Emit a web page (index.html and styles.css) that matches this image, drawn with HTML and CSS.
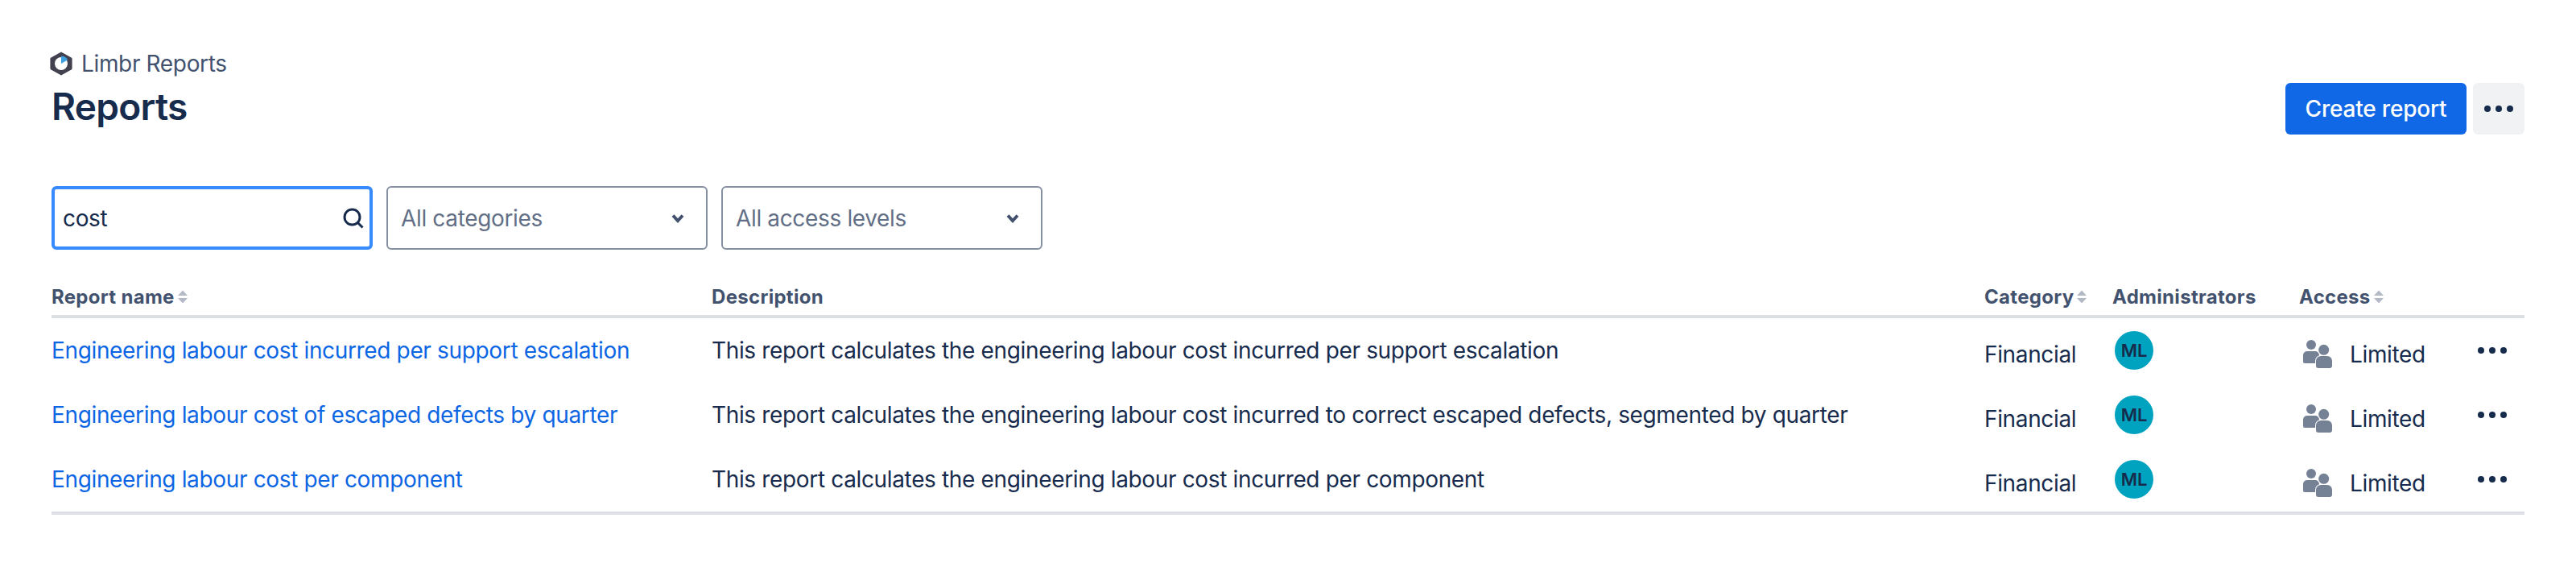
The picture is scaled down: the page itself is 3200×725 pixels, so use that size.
FILE: index.html
```html
<!DOCTYPE html>
<html lang="en">
<head>
<meta charset="utf-8">
<title>Reports</title>
<link rel="stylesheet" href="styles.css">
</head>
<body>
<main class="page">
  <header class="head">
    <div class="head-left">
      <div class="crumb">
        <svg class="logo" viewBox="0 0 28 30"><path d="M14 0.500 26.600 7.500a2 2 0 0 1 1 1.700v11.600a2 2 0 0 1-1 1.700L14 29.500 1.400 22.500a2 2 0 0 1-1-1.700V9.200a2 2 0 0 1 1-1.700z" fill="#42414f"/><circle cx="14" cy="15" r="8" fill="#fff"/><path d="M14 15V5.500a9.500 9.500 0 0 1 8.200 4.800z" fill="#3d9fe0"/></svg>
        <span>Limbr Reports</span>
      </div>
      <h1 class="title">Reports</h1>
    </div>
    <div class="actions">
      <button class="primary">Create report</button>
      <button class="more"><svg class="dots" viewBox="0 0 36 8"><circle cx="4" cy="4" r="4"/><circle cx="18" cy="4" r="4"/><circle cx="32" cy="4" r="4"/></svg></button>
    </div>
  </header>

  <section class="filters">
    <div class="field search"><span>cost</span>
      <svg class="search-icon" viewBox="0 0 26 26"><circle cx="11.500" cy="11.500" r="9.500"/><path d="M18.500 18.500 24.500 24.500"/></svg>
    </div>
    <div class="field select"><span>All categories</span>
      <svg class="chev" viewBox="0 0 16 12"><path d="M2 2.500 8 9l6-6.500"/></svg>
    </div>
    <div class="field select"><span>All access levels</span>
      <svg class="chev" viewBox="0 0 16 12"><path d="M2 2.500 8 9l6-6.500"/></svg>
    </div>
  </section>

  <section class="table">
    <div class="row header">
      <div class="c-name">Report name<svg class="sort" viewBox="0 0 12 16"><path d="M6 0 12 6.500H0z"/><path d="M0 9.500H12L6 16z"/></svg></div>
      <div class="c-desc">Description</div>
      <div class="c-cat">Category<svg class="sort" viewBox="0 0 12 16"><path d="M6 0 12 6.500H0z"/><path d="M0 9.500H12L6 16z"/></svg></div>
      <div class="c-admin">Administrators</div>
      <div class="c-access">Access<svg class="sort" viewBox="0 0 12 16"><path d="M6 0 12 6.500H0z"/><path d="M0 9.500H12L6 16z"/></svg></div>
      <div class="c-menu"></div>
    </div>

    <div class="row body">
      <div class="c-name"><a href="#">Engineering labour cost incurred per support escalation</a></div>
      <div class="c-desc">This report calculates the engineering labour cost incurred per support escalation</div>
      <div class="c-cat low">Financial</div>
      <div class="c-admin"><span class="avatar">ML</span></div>
      <div class="c-access low"><svg class="people" viewBox="0 0 36 36"><circle cx="10" cy="6" r="6"/><path d="M0 19a5 5 0 0 1 5-5h10a5 5 0 0 1 5 5v8a2 2 0 0 1-2 2H2a2 2 0 0 1-2-2z"/><circle class="front" cx="25.700" cy="12.300" r="6.500"/><path class="front" d="M16 26a6 6 0 0 1 6-6h8a6 6 0 0 1 6 6v6a3 3 0 0 1-3 3H19a3 3 0 0 1-3-3z"/></svg><span>Limited</span></div>
      <div class="c-menu"><svg class="dots" viewBox="0 0 36 8"><circle cx="4" cy="4" r="4"/><circle cx="18" cy="4" r="4"/><circle cx="32" cy="4" r="4"/></svg></div>
    </div>

    <div class="row body">
      <div class="c-name"><a href="#">Engineering labour cost of escaped defects by quarter</a></div>
      <div class="c-desc">This report calculates the engineering labour cost incurred to correct escaped defects, segmented by quarter</div>
      <div class="c-cat low">Financial</div>
      <div class="c-admin"><span class="avatar">ML</span></div>
      <div class="c-access low"><svg class="people" viewBox="0 0 36 36"><circle cx="10" cy="6" r="6"/><path d="M0 19a5 5 0 0 1 5-5h10a5 5 0 0 1 5 5v8a2 2 0 0 1-2 2H2a2 2 0 0 1-2-2z"/><circle class="front" cx="25.700" cy="12.300" r="6.500"/><path class="front" d="M16 26a6 6 0 0 1 6-6h8a6 6 0 0 1 6 6v6a3 3 0 0 1-3 3H19a3 3 0 0 1-3-3z"/></svg><span>Limited</span></div>
      <div class="c-menu"><svg class="dots" viewBox="0 0 36 8"><circle cx="4" cy="4" r="4"/><circle cx="18" cy="4" r="4"/><circle cx="32" cy="4" r="4"/></svg></div>
    </div>

    <div class="row body">
      <div class="c-name"><a href="#">Engineering labour cost per component</a></div>
      <div class="c-desc">This report calculates the engineering labour cost incurred per component</div>
      <div class="c-cat low">Financial</div>
      <div class="c-admin"><span class="avatar">ML</span></div>
      <div class="c-access low"><svg class="people" viewBox="0 0 36 36"><circle cx="10" cy="6" r="6"/><path d="M0 19a5 5 0 0 1 5-5h10a5 5 0 0 1 5 5v8a2 2 0 0 1-2 2H2a2 2 0 0 1-2-2z"/><circle class="front" cx="25.700" cy="12.300" r="6.500"/><path class="front" d="M16 26a6 6 0 0 1 6-6h8a6 6 0 0 1 6 6v6a3 3 0 0 1-3 3H19a3 3 0 0 1-3-3z"/></svg><span>Limited</span></div>
      <div class="c-menu"><svg class="dots" viewBox="0 0 36 8"><circle cx="4" cy="4" r="4"/><circle cx="18" cy="4" r="4"/><circle cx="32" cy="4" r="4"/></svg></div>
    </div>
  </section>
</main>
</body>
</html>
```

FILE: styles.css
```css
* { box-sizing: border-box; }
html, body { margin: 0; padding: 0; background: #fff; }
body { font-family: Inter, "Liberation Sans", sans-serif; color: #172b4d; font-size: 28px; letter-spacing: -0.35px; }
.page { padding: 64px 64px 0; height: 725px; overflow: hidden; }

.head { display: flex; justify-content: space-between; align-items: flex-start; height: 167px; }
.crumb { display: flex; align-items: center; gap: 11px; height: 30px; color: #42526e; line-height: 30px; margin-left: -2px; }
.logo { width: 28px; height: 30px; flex: none; }
.title { margin: 10px 0 0; font-size: 46px; line-height: 56px; font-weight: 600; letter-spacing: -0.7px; }
.actions { display: flex; gap: 8px; padding-top: 39px; }
button { border: 0; border-radius: 6px; font: inherit; height: 64px; padding: 0; display: flex; align-items: center; justify-content: center; }
.primary { width: 225px; background: #1068e6; color: #fff; font-weight: 500; letter-spacing: -0.2px; }
.more { width: 64px; background: #f1f2f4; }
.dots { width: 36px; height: 8px; fill: #172b4d; display: block; }

.filters { display: flex; gap: 17px; height: 79px; }
.field { width: 399px; height: 79px; border-radius: 6px; display: flex; align-items: center; justify-content: space-between; }
.search { border: 4px solid #388bff; padding: 0 7px 0 10px; color: #172b4d; }
.search-icon { width: 26px; height: 26px; fill: none; stroke: #172b4d; stroke-width: 3; }
.select { border: 2px solid #8590a2; padding: 0 27px 0 16px; color: #626f86; }
.chev { width: 16px; height: 12px; fill: none; stroke: #42526e; stroke-width: 4; }

.table { margin-top: 41px; border-bottom: 4px solid #dcdfe4; }
.row { display: grid; grid-template-columns: 820px 1581px 159px 232px 1fr 64px; align-items: center; }
.header { height: 44px; border-bottom: 4px solid #dcdfe4; font-size: 24px; font-weight: 700; color: #42526e; padding-bottom: 6px; letter-spacing: 0.3px; }
.sort { width: 12px; height: 17px; fill: #b3b9c4; margin-left: 4px; }
.body { height: 80px; }
.body a { color: #0c66e4; text-decoration: none; }
.c-admin .avatar { width: 48px; height: 48px; margin-left: 3px; border-radius: 50%; background: #00a3bf; color: #172b4d; font-size: 22px; font-weight: 600; letter-spacing: 0; display: flex; align-items: center; justify-content: center; }
.low { padding-top: 10px; }
.c-access { display: flex; align-items: center; }
.people { width: 36px; height: 36px; fill: #758195; margin: 0 22px 0 5px; flex: none; overflow: visible; }
.people .front { stroke: #fff; stroke-width: 2; paint-order: stroke; }
.c-menu { display: flex; justify-content: flex-end; padding-right: 22px; }
```
